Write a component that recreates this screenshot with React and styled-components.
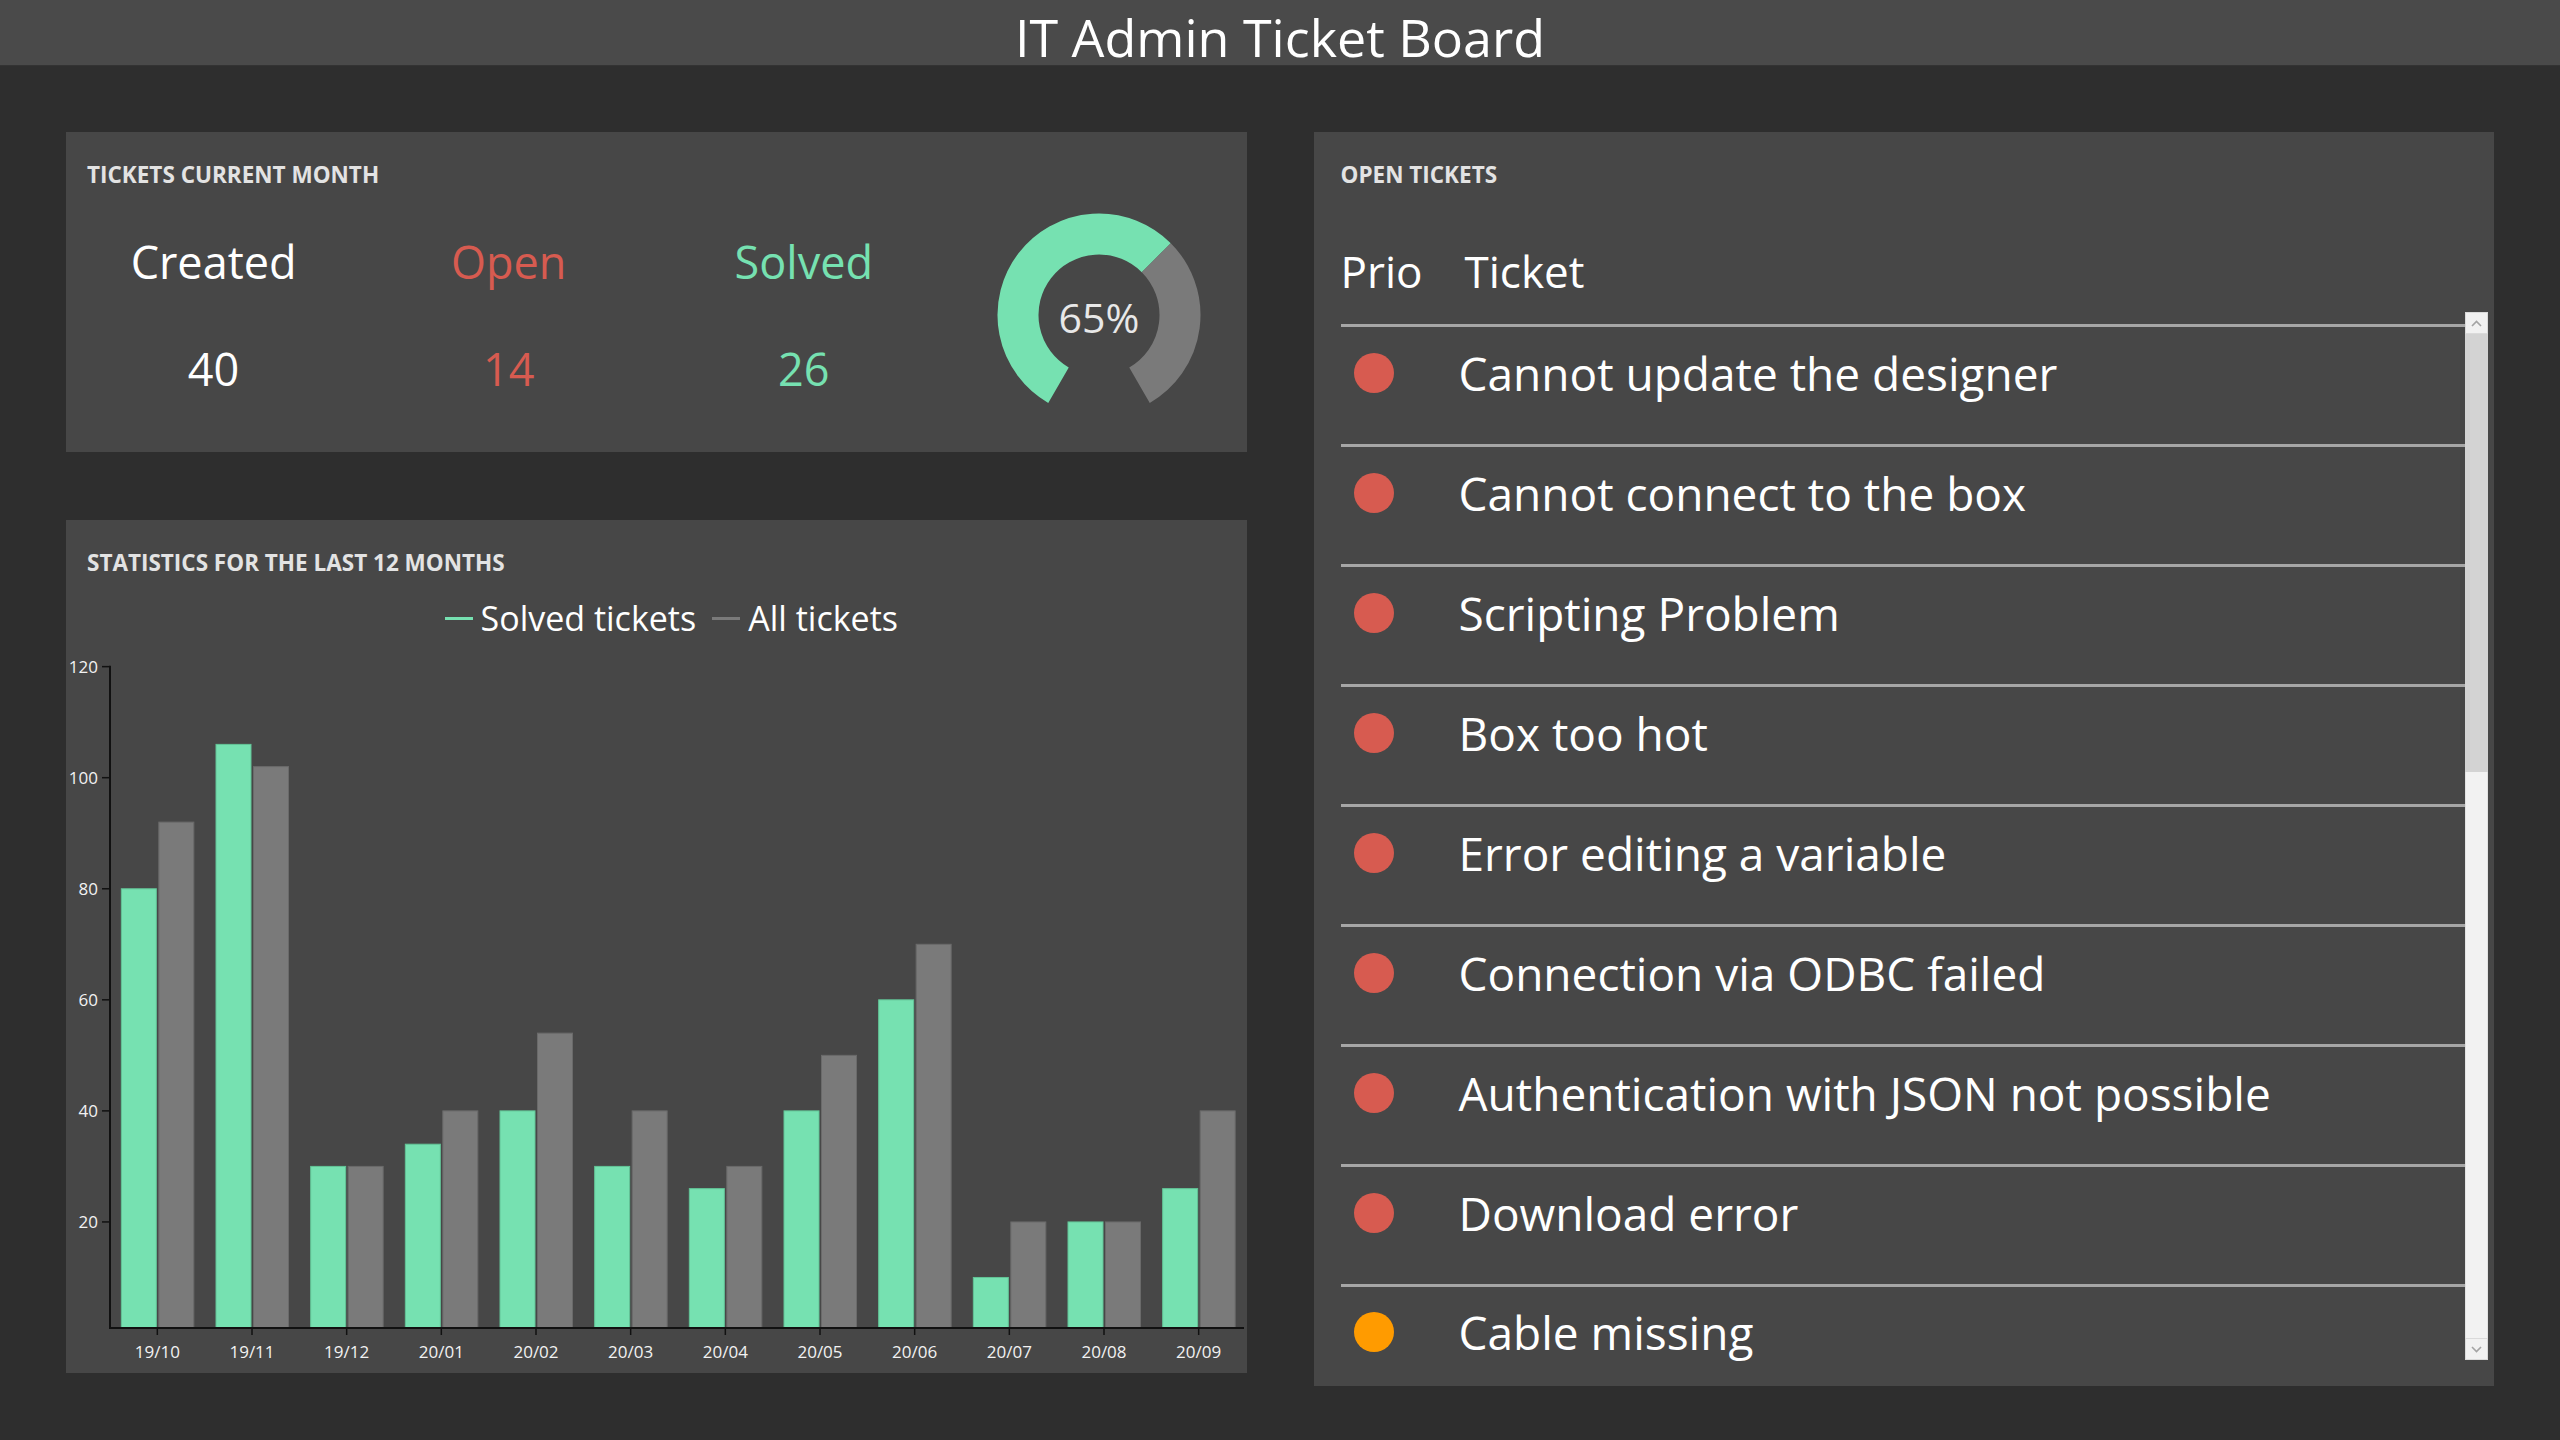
import React from "react";
import styled, { createGlobalStyle } from "styled-components";

const GREEN = "#76e1b1";
const GREY = "#7a7a7a";
const RED = "#d75b50";
const ORANGE = "#ff9b00";

const months = ["19/10", "19/11", "19/12", "20/01", "20/02", "20/03", "20/04", "20/05", "20/06", "20/07", "20/08", "20/09"];
const solved = [80, 106, 30, 34, 40, 30, 26, 40, 60, 10, 20, 26];
const total = [92, 102, 30, 40, 54, 40, 30, 50, 70, 20, 20, 40];

const tickets = [
  { title: "Cannot update the designer", prio: "high" },
  { title: "Cannot connect to the box", prio: "high" },
  { title: "Scripting Problem", prio: "high" },
  { title: "Box too hot", prio: "high" },
  { title: "Error editing a variable", prio: "high" },
  { title: "Connection via ODBC failed", prio: "high" },
  { title: "Authentication with JSON not possible", prio: "high" },
  { title: "Download error", prio: "high" },
  { title: "Cable missing", prio: "medium" },
];

const GlobalStyle = createGlobalStyle`
  html, body {
    margin: 0;
    background: #2e2e2e;
  }
  body {
    font-family: "Open Sans", "Noto Sans", sans-serif;
    color: #fff;
  }
`;

function Gauge({ value }) {
  const cx = 105;
  const cy = 105;
  const r = 81;
  const pt = (deg) => {
    const a = (deg * Math.PI) / 180;
    return [cx + r * Math.sin(a), cy - r * Math.cos(a)];
  };
  const arc = (a0, a1) => {
    const [x0, y0] = pt(a0);
    const [x1, y1] = pt(a1);
    const large = a1 - a0 > 180 ? 1 : 0;
    return `M ${x0} ${y0} A ${r} ${r} 0 ${large} 1 ${x1} ${y1}`;
  };
  const split = -150 + 300 * (value / 100);

  return (
    <svg width="210" height="210" viewBox="0 0 210 210">
      <path d={arc(-150, split)} fill="none" stroke={GREEN} strokeWidth="41" />
      <path d={arc(split, 150)} fill="none" stroke={GREY} strokeWidth="41" />
      <text x={cx} y="123" textAnchor="middle" fontSize="41" fill="#e8e8e8" fontFamily="Open Sans, sans-serif">
        {value}%
      </text>
    </svg>
  );
}

function BarChart() {
  const left = 44;
  const right = 1180;
  const zeroY = 684;
  const unit = 5.553;
  const axisY = 679;
  const band = (right - left) / months.length;
  const y = (v) => zeroY - v * unit;

  return (
    <ChartSvg width="1180" height="724" viewBox="0 0 1180 724">
      {months.map((m, i) => {
        const c = left + band * (i + 0.5);
        return (
          <g key={m}>
            <rect x={c - 36} y={y(solved[i])} width="35" height={axisY - y(solved[i])} fill={GREEN} stroke="#62c497" strokeWidth="1" />
            <rect x={c + 1.5} y={y(total[i])} width="35" height={axisY - y(total[i])} fill={GREY} stroke="#6a6a6a" strokeWidth="1" />
            <line x1={c} x2={c} y1={axisY} y2={axisY + 7} stroke="#111" strokeWidth="1.5" />
            <text x={c} y="709" textAnchor="middle" fontSize="17" fill="#f2f2f2">
              {m}
            </text>
          </g>
        );
      })}
      {[20, 40, 60, 80, 100, 120].map((v) => (
        <g key={v}>
          <line x1="36" x2={left} y1={y(v)} y2={y(v)} stroke="#111" strokeWidth="1.5" />
          <text x="32" y={y(v) + 6} textAnchor="end" fontSize="17" fill="#f2f2f2">
            {v}
          </text>
        </g>
      ))}
      <line x1={left} x2={left} y1={y(120) - 1} y2={axisY + 1} stroke="#111" strokeWidth="2" />
      <line x1={left} x2={right - 2} y1={axisY} y2={axisY} stroke="#111" strokeWidth="2" />
    </ChartSvg>
  );
}

function Chevron({ up }) {
  return (
    <svg width="11" height="7" viewBox="0 0 11 7">
      <polyline
        points={up ? "1,6 5.5,1.5 10,6" : "1,1 5.5,5.5 10,1"}
        fill="none"
        stroke="#a3a3a3"
        strokeWidth="1.6"
      />
    </svg>
  );
}

export default function App() {
  return (
    <>
      <GlobalStyle />
      <Header>
        <Title>IT Admin Ticket Board</Title>
      </Header>
      <Board>
        <Column>
          <Panel $pad="28px 0 12px">
            <CardTitle $inset={21}>Tickets current month</CardTitle>
            <StatsRow>
              <Stat>
                <StatText $color="#ffffff">Created</StatText>
                <StatText $color="#ffffff">40</StatText>
              </Stat>
              <Stat>
                <StatText $color={RED}>Open</StatText>
                <StatText $color={RED}>14</StatText>
              </Stat>
              <Stat>
                <StatText $color={GREEN}>Solved</StatText>
                <StatText $color={GREEN}>26</StatText>
              </Stat>
              <GaugeCell>
                <Gauge value={65} />
              </GaugeCell>
            </StatsRow>
          </Panel>
          <Panel $pad="28px 0 0">
            <CardTitle $inset={21}>Statistics for the last 12 months</CardTitle>
            <Legend>
              <LegendItem>
                <Swatch $color={GREEN} />
                Solved tickets
              </LegendItem>
              <LegendItem>
                <Swatch $color={GREY} />
                All tickets
              </LegendItem>
            </Legend>
            <BarChart />
          </Panel>
        </Column>
        <Panel $pad="28px 6px 26px 27px">
          <CardTitle $inset={0}>Open tickets</CardTitle>
          <TableHead>
            <HeadCell $width={124}>Prio</HeadCell>
            <HeadCell>Ticket</HeadCell>
          </TableHead>
          <ScrollBody>
            <TicketList>
              {tickets.map((t) => (
                <TicketRow key={t.title}>
                  <PrioCell>
                    <Dot $color={t.prio === "high" ? RED : ORANGE} />
                  </PrioCell>
                  <TicketText>{t.title}</TicketText>
                </TicketRow>
              ))}
            </TicketList>
            <ScrollBar>
              <ScrollButton>
                <Chevron up />
              </ScrollButton>
              <Thumb />
              <Track />
              <ScrollButton>
                <Chevron />
              </ScrollButton>
            </ScrollBar>
          </ScrollBody>
        </Panel>
      </Board>
    </>
  );
}

const Header = styled.header`
  height: 66px;
  box-sizing: border-box;
  padding-top: 8px;
  background: #4a4a4a;
  border-bottom: 1px solid #333;
  text-align: center;
`;

const Title = styled.h1`
  margin: 0;
  font-size: 52px;
  font-weight: 400;
  line-height: 58px;
  color: #fff;
`;

const Board = styled.main`
  display: grid;
  grid-template-columns: 1fr 1fr;
  column-gap: 67px;
  align-items: start;
  padding: 66px 66px 0;
`;

const Column = styled.div`
  display: flex;
  flex-direction: column;
  gap: 68px;
`;

const Panel = styled.section`
  box-sizing: border-box;
  display: flex;
  flex-direction: column;
  padding: ${(p) => p.$pad};
  background: #474747;
`;

const CardTitle = styled.h2`
  margin: 0;
  padding-left: ${(p) => p.$inset}px;
  font-size: 22.5px;
  font-weight: 700;
  line-height: 30px;
  text-transform: uppercase;
  color: #e3e3e3;
`;

const StatsRow = styled.div`
  display: grid;
  grid-template-columns: repeat(4, 1fr);
  align-items: center;
  height: 250px;
`;

const Stat = styled.div`
  display: flex;
  flex-direction: column;
  align-items: center;
  gap: 47px;
`;

const StatText = styled.span`
  font-size: 45px;
  line-height: 60px;
  color: ${(p) => p.$color};
`;

const GaugeCell = styled.div`
  display: flex;
  justify-content: center;
`;

const Legend = styled.div`
  display: flex;
  justify-content: center;
  align-items: center;
  gap: 16px;
  height: 40px;
  margin-top: 20px;
  padding-left: 30px;
`;

const LegendItem = styled.div`
  display: flex;
  align-items: center;
  gap: 8px;
  font-size: 34px;
  line-height: 40px;
  color: #fff;
`;

const Swatch = styled.span`
  width: 28px;
  height: 3px;
  background: ${(p) => p.$color};
`;

const ChartSvg = styled.svg`
  display: block;
  margin-top: 11px;
  font-family: "Open Sans", sans-serif;
`;

const TableHead = styled.div`
  display: flex;
  margin-top: 56px;
  font-size: 44px;
  line-height: 50px;
  color: #fff;
`;

const HeadCell = styled.div`
  width: ${(p) => (p.$width ? `${p.$width}px` : "auto")};
`;

const ScrollBody = styled.div`
  display: flex;
  height: 1048px;
  margin-top: 16px;
`;

const TicketList = styled.div`
  flex: 1;
  padding-top: 12px;
`;

const TicketRow = styled.div`
  display: flex;
  align-items: center;
  box-sizing: border-box;
  height: 120px;
  padding-bottom: 25px;
  border-top: 3px solid #a6a6a6;

  &:last-child {
    height: 76px;
    padding: 17px 0 0;
  }
`;

const PrioCell = styled.div`
  width: 118px;
  flex: none;
`;

const Dot = styled.span`
  display: block;
  width: 40px;
  height: 40px;
  margin-left: 13px;
  border-radius: 50%;
  background: ${(p) => p.$color};
`;

const TicketText = styled.span`
  font-size: 46px;
  line-height: 50px;
  color: #fff;
  white-space: nowrap;
`;

const ScrollBar = styled.div`
  display: flex;
  flex-direction: column;
  width: 23px;
  flex: none;
  background: #f1f1f1;
`;

const ScrollButton = styled.div`
  display: flex;
  align-items: center;
  justify-content: center;
  height: 22px;
  box-sizing: border-box;
  border: 1px solid #dadada;
  background: #f1f1f1;
`;

const Thumb = styled.div`
  height: 438px;
  background: #d3d3d3;
`;

const Track = styled.div`
  flex: 1;
  border-left: 1px solid #e2e2e2;
  border-right: 1px solid #e2e2e2;
  background: #f2f2f2;
`;
